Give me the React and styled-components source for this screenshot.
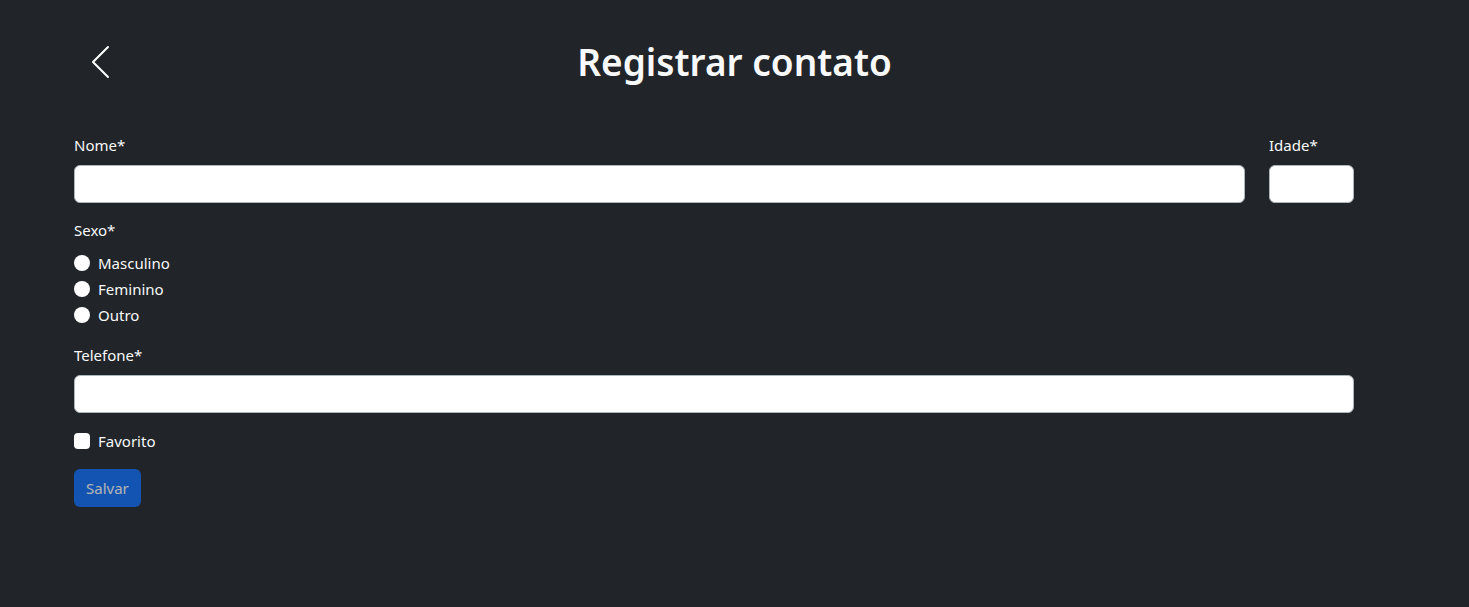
import React from 'react';
import styled, { createGlobalStyle } from 'styled-components';

const GlobalStyle = createGlobalStyle`
  html, body {
    margin: 0;
    background: #212529;
    color: #dee2e6;
    font-family: "Noto Sans", "Open Sans", sans-serif;
  }
  * { box-sizing: border-box; }
`;

const Page = styled.div`
  min-height: 607px;
  background: #212529;
`;

const Header = styled.header`
  display: grid;
  grid-template-columns: 1fr auto 1fr;
  align-items: center;
  align-content: start;
  padding: 40px 0 0;
  height: 134px;
`;

const BackButton = styled.button`
  justify-self: start;
  margin-left: 84px;
  width: 32px;
  height: 44px;
  display: flex;
  align-items: center;
  justify-content: center;
  background: none;
  border: none;
  padding: 0;
  cursor: pointer;
`;

const Title = styled.h1`
  margin: 0;
  font-size: 37px;
  font-weight: 600;
  color: #f8f9fa;
  line-height: 1.2;
`;

const Form = styled.form`
  width: 1280px;
  margin-left: 74px;
  display: flex;
  flex-direction: column;
`;

const Row = styled.div`
  display: flex;
  gap: 24px;
`;

const Field = styled.div`
  display: flex;
  flex-direction: column;
  flex: ${p => (p.$grow ? 1 : '0 0 auto')};
  width: ${p => p.$width || 'auto'};
  margin-bottom: 16px;
`;

const Label = styled.label`
  font-size: 15px;
  color: #f8f9fa;
  line-height: 22px;
  margin-bottom: 9px;
`;

const Input = styled.input`
  height: 38px;
  width: 100%;
  border: 1px solid #adb5bd;
  border-radius: 6px;
  background: #fff;
  padding: 6px 12px;
  font-size: 15px;
  outline: none;
`;

const OptionList = styled.div`
  display: flex;
  flex-direction: column;
`;

const Option = styled.label`
  display: flex;
  align-items: center;
  gap: 8px;
  height: 26px;
  font-size: 15px;
  color: #f8f9fa;
  cursor: pointer;
`;

const Mark = styled.span`
  width: 16px;
  height: 16px;
  background: #fff;
  border-radius: ${p => (p.$round ? '50%' : '4px')};
  flex: 0 0 auto;
`;

const Check = styled(Option)`
  margin: -1px 0 15px;
`;

const SaveButton = styled.button`
  align-self: flex-start;
  height: 38px;
  padding: 0 12px;
  border: none;
  border-radius: 6px;
  background: #0d6efd;
  color: #fff;
  font-family: inherit;
  font-size: 15px;
  opacity: 0.65;
`;

export default function App() {
  return (
    <Page>
      <GlobalStyle />
      <Header>
        <BackButton type="button" aria-label="Voltar">
          <svg width="20" height="34" viewBox="0 0 20 34" fill="none">
            <path d="M18 2 L3 17 L18 32" stroke="#fff" strokeWidth="2" strokeLinecap="round" strokeLinejoin="round" />
          </svg>
        </BackButton>
        <Title>Registrar contato</Title>
        <div />
      </Header>
      <Form onSubmit={e => e.preventDefault()}>
        <Row>
          <Field $grow>
            <Label>Nome*</Label>
            <Input />
          </Field>
          <Field $width="85px">
            <Label>Idade*</Label>
            <Input />
          </Field>
        </Row>
        <Field>
          <Label>Sexo*</Label>
          <OptionList>
            <Option><Mark $round />Masculino</Option>
            <Option><Mark $round />Feminino</Option>
            <Option><Mark $round />Outro</Option>
          </OptionList>
        </Field>
        <Field>
          <Label>Telefone*</Label>
          <Input />
        </Field>
        <Check><Mark />Favorito</Check>
        <SaveButton type="submit" disabled>Salvar</SaveButton>
      </Form>
    </Page>
  );
}
